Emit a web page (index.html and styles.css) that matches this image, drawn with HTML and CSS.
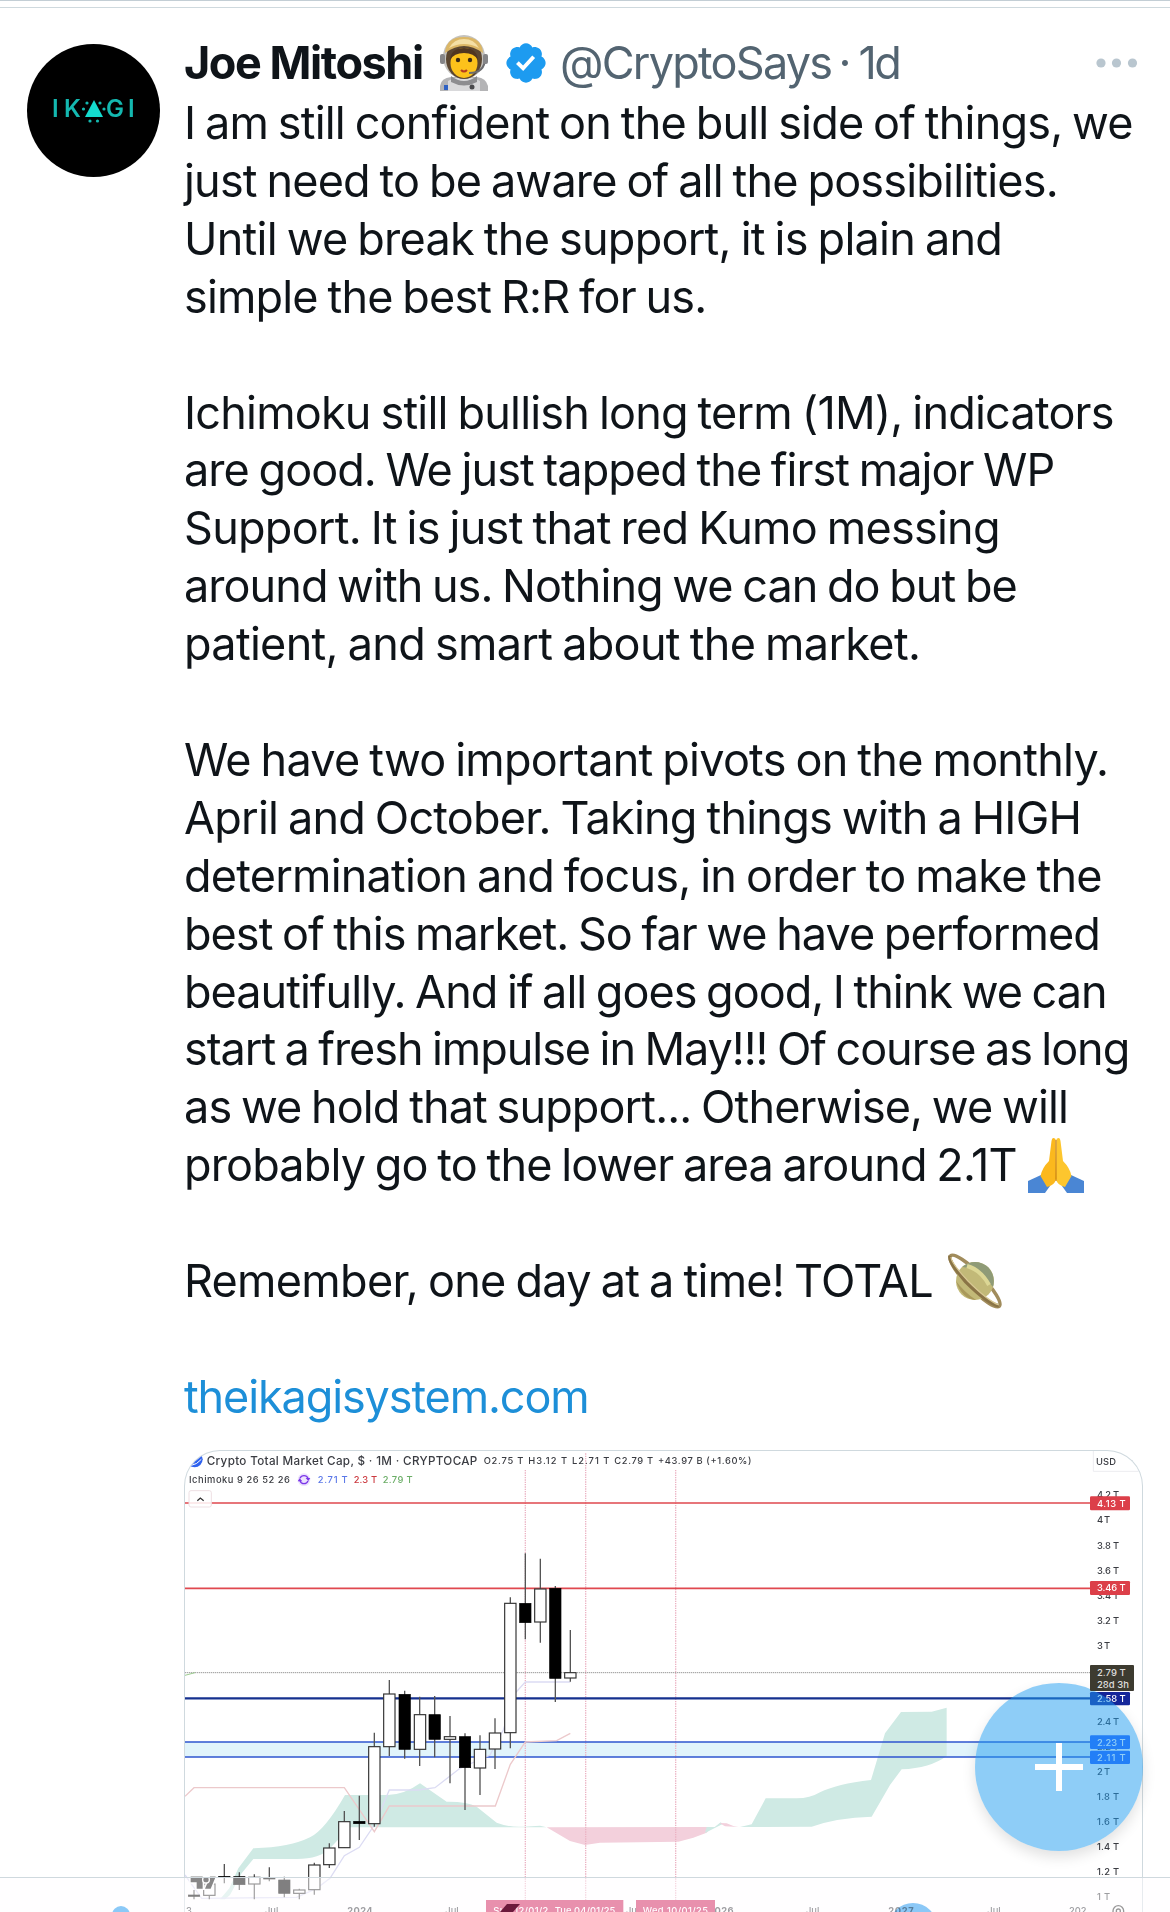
FILE: index.html
```
<!DOCTYPE html>
<html lang="en">
<head>
    <meta charset="UTF-8">
    <meta name="viewport" content="width=device-width, initial-scale=1.0">
    <title>Joe Mitoshi</title>
    <link rel="stylesheet" href="styles.css">
</head>
<body>
    <div class="top-line"></div>
    <article class="post">
        <div class="avatar">
            <svg viewBox="0 0 133 133">
                <g fill="#14b8b0">
                    <text class="avatar-text" x="25" y="73">I</text>
                    <text class="avatar-text" x="37" y="73">K</text>
                    <text class="avatar-text" x="79" y="73">G</text>
                    <text class="avatar-text" x="101" y="73">I</text>
                    <path d="M67 56 L76 73 H58 Z" fill="#14dccf"/>
                    <circle cx="60" cy="59" r="1.600"/><circle cx="73" cy="59" r="1.600"/>
                    <circle cx="56.500" cy="65" r="1.600"/><circle cx="77" cy="65" r="1.600"/>
                    <circle cx="63" cy="77" r="1.600"/><circle cx="70.500" cy="77" r="1.600"/>
                </g>
            </svg>
        </div>
        <div class="content">
            <header class="head">
                <span class="name">Joe Mitoshi</span>
                <svg class="astronaut" viewBox="0 0 50 56">
                    <path d="M1 56 V51 Q2 43 12 42 H38 Q47 43 49 51 V56 Z" fill="#b4b4b6"/>
                    <path d="M9 56 V46 L15 43 H35 L41 46 V56 Z" fill="#d9d9db"/>
                    <path d="M12 41 Q25 51 38 41 V47 Q25 54 12 47 Z" fill="#8d8d90"/>
                    <ellipse cx="25" cy="22" rx="21" ry="22" fill="#c4c2be"/>
                    <ellipse cx="25" cy="24" rx="18" ry="20" fill="#5b4630"/>
                    <path d="M6 18 Q7 2 25 2 Q43 2 44 18 Q34 11 25 11 Q16 11 6 18 Z" fill="#dcb766"/>
                    <path d="M10 13 Q15 4 25 4 Q35 4 40 13 Q25 5 10 13 Z" fill="#f4dfa5"/>
                    <ellipse cx="25" cy="28" rx="13.500" ry="15" fill="#fcc21b"/>
                    <path d="M11 25 Q12 13 25 13 Q38 13 39 25 Q35 18 25 18 Q15 18 11 25 Z" fill="#503620"/>
                    <circle cx="19" cy="25" r="2.200" fill="#3a2a18"/><circle cx="31" cy="25" r="2.200" fill="#3a2a18"/>
                    <path d="M22 35 Q25 38 28 35" fill="none" stroke="#b53c22" stroke-width="2"/>
                    <path d="M46 23 Q46 38 30 38" fill="none" stroke="#6c6c6f" stroke-width="2"/>
                    <rect x="1" y="19" width="5" height="10" rx="2" fill="#858588"/><rect x="44" y="19" width="5" height="10" rx="2" fill="#858588"/>
                    <rect x="5" y="50" width="4" height="5" fill="#2f62c4"/><circle cx="33" cy="52" r="2.500" fill="#4a4a4d"/>
                </svg>
                <svg class="badge" viewBox="0 0 22 22">
                    <path fill="#1d9bf0" d="M20.396 11c-.018-.646-.215-1.275-.57-1.816-.354-.54-.852-.972-1.438-1.246.223-.607.27-1.264.14-1.897-.131-.634-.437-1.218-.882-1.687-.47-.445-1.053-.75-1.687-.882-.633-.13-1.290-.083-1.897.14-.273-.587-.704-1.086-1.245-1.440S11.647 1.620 11 1.604c-.646.017-1.273.213-1.813.568s-.969.854-1.240 1.440c-.608-.223-1.267-.272-1.902-.14-.635.130-1.220.436-1.690.882-.445.470-.749 1.055-.878 1.688-.130.633-.080 1.290.144 1.896-.587.274-1.087.705-1.443 1.245-.356.540-.555 1.170-.574 1.817.020.647.218 1.276.574 1.817.356.540.856.972 1.443 1.245-.224.606-.274 1.263-.144 1.896.130.634.433 1.218.877 1.688.470.443 1.054.747 1.687.878.633.132 1.290.084 1.897-.136.274.586.705 1.084 1.246 1.439.540.354 1.170.551 1.816.569.647-.016 1.276-.213 1.817-.567s.972-.854 1.245-1.440c.604.239 1.266.296 1.903.164.636-.132 1.220-.447 1.680-.907.460-.460.776-1.044.908-1.681s.075-1.299-.165-1.903c.586-.274 1.084-.705 1.439-1.246.354-.540.551-1.170.569-1.816z"/>
                    <path fill="#fff" d="M9.660 14.850l-3.430-3.430 1.300-1.300 2.070 2.070 4.400-4.790 1.350 1.240z"/>
                </svg>
                <span class="handle">@CryptoSays</span>
                <span class="dot">·</span>
                <span class="time">1d</span>
                <svg class="more" viewBox="0 0 42 10">
                    <circle cx="5" cy="5" r="4.600"/><circle cx="20.500" cy="5" r="4.600"/><circle cx="36.500" cy="5" r="4.600"/>
                </svg>
            </header>
            <div class="text">
                <p>
                    <span class="line l1">I am still confident on the bull side of things, we</span>
                    <span class="line l2">just need to be aware of all the possibilities.</span>
                    <span class="line l3">Until we break the support, it is plain and</span>
                    <span class="line l4">simple the best R:R for us.</span>
                </p>
                <p>
                    <span class="line l5">Ichimoku still bullish long term (1M), indicators</span>
                    <span class="line l6">are good. We just tapped the first major WP</span>
                    <span class="line l7">Support. It is just that red Kumo messing</span>
                    <span class="line l8">around with us. Nothing we can do but be</span>
                    <span class="line l9">patient, and smart about the market.</span>
                </p>
                <p>
                    <span class="line l10">We have two important pivots on the monthly.</span>
                    <span class="line l11">April and October. Taking things with a HIGH</span>
                    <span class="line l12">determination and focus, in order to make the</span>
                    <span class="line l13">best of this market. So far we have performed</span>
                    <span class="line l14">beautifully. And if all goes good, I think we can</span>
                    <span class="line l15">start a fresh impulse in May!!! Of course as long</span>
                    <span class="line l16">as we hold that support... Otherwise, we will</span>
                    <span class="row"><span class="line l17">probably go to the lower area around 2.1T</span>
                        <svg class="emoji" viewBox="0 0 56 56">
                            <path d="M0 44 L13 38 L22 49 L17 56 H0 Z" fill="#4a86d4"/>
                            <path d="M56 44 L43 38 L34 49 L39 56 H56 Z" fill="#4a86d4"/>
                            <path d="M27.500 2 Q24 -1 23.500 4 L21 24 Q14 31 12.500 39 L19 50 Q27 48 28 42 Z" fill="#fbb81d"/>
                            <path d="M28.500 2 Q32 -1 32.500 4 L35 24 Q42 31 43.500 39 L37 50 Q29 48 28 42 Z" fill="#fdc62e"/>
                            <path d="M28 3 V44" stroke="#c9800f" stroke-width="1.200"/>
                        </svg>
                    </span>
                </p>
                <p>
                    <span class="row"><span class="line l18">Remember, one day at a time! TOTAL</span>
                        <svg class="emoji saturn" viewBox="0 0 56 56">
                            <ellipse cx="28" cy="28" rx="35" ry="8" transform="rotate(46 28 28)" fill="none" stroke="#a18c5c" stroke-width="3.500"/>
                            <circle cx="28" cy="28" r="19" fill="#c2b978"/>
                            <path d="M15 14 Q31 15 46 34 Q49 23 41 14 Q28 4 15 14 Z" fill="#8f9b77"/>
                            <path d="M20 13 Q34 17 42 32" fill="none" stroke="#dcd795" stroke-width="4"/>
                            <path d="M9 28 Q17 39 29 47 Q15 46 9 28 Z" fill="#a9995b"/>
                            <path d="M3 3 Q1 8 19 29 Q40 50 52 53" fill="none" stroke="#8a7446" stroke-width="3.500"/>
                            <path d="M4 4 Q4 10 21 28 Q41 48 52 52" fill="none" stroke="#d7c793" stroke-width="1.200"/>
                        </svg>
                    </span>
                </p>
                <p><a class="line link">theikagisystem.com</a></p>
            </div>
            <div class="card">
                <!-- chart canvas is drawn at 3x -->
                <svg class="chart" viewBox="45 -627 2871 1383">
                    <!-- kumo -->
                    <path class="kumo-up" d="M150 718 L178 685 L205 625 L250 565 Q360 562 420 532 Q465 510 525 405 H650 Q700 406 750 370 L830 425 Q890 424 920 440 L980 488 Q1020 503 1060 500 L1110 497 L1130 502 H540 L480 565 Q450 597 380 597 H250 L215 640 L180 705 L165 718 Z"/>
                    <path class="kumo-down" d="M1130 502 L1200 543 L1245 555 L1290 548 L1525 545 L1570 533 L1610 518 L1625 501 Z"/>
                    <path class="kumo-up" d="M1605 519 L1610 501 H1634 L1652 487 L1658 492 Z"/>
                    <path class="kumo-down" d="M1648 489 L1670 490 L1690 498 L1705 501 L1665 499 Z"/>
                    <!-- support zone -->
                    <rect x="45" y="246" width="2715" height="45" fill="#c9ebf7" fill-opacity=".55"/>
                    <path class="kumo-up" d="M1710 501 L1745 493 L1787 415 L1880 415 Q1920 415 1950 397 Q2000 372 2103 360 L2145 220 L2193 156 L2285 155 L2330 143 V288 Q2280 325 2195 328 L2160 375 L2105 470 Q2000 473 1925 500 Z"/>
                    <!-- event lines -->
                    <path class="event" d="M1066 -570 V756 M1247 -620 V756 M1517 -570 V756"/>
                    <!-- levels -->
                    <path d="M45 -471 H2760 M45 -215 H2760" stroke="#e0484f" stroke-width="5"/>
                    <path d="M45 38 H2760" stroke="#9a9a9a" stroke-width="3" stroke-dasharray="4 2"/>
                    <path d="M45 115 H2760" stroke="#15308f" stroke-width="7"/>
                    <path d="M45 246 H2760 M45 291 H2760" stroke="#2f56cf" stroke-width="5"/>
                    <!-- tenkan and kijun -->
                    <path class="tenkan" d="M45 645 L95 715 L380 712 L440 685 L480 655 L523 587 L568 562 L613 495 L658 390 H745 L795 383 L870 325 L960 285 L1000 210 L1035 100 L1066 66 H1201"/>
                    <path class="kijun" d="M45 409 L72 383 H523 L613 515 L658 438 H976 L1021 313 L1066 246 L1160 242 L1201 220"/>
                    <path d="M45 46 L75 38" stroke="#9bcb8f" stroke-width="3"/>
                    <!-- candles -->
                    <path class="wick" d="M72 690 V718 M118 706 V718 M163 612 V670 M208 637 V690 M253 643 V718 M298 622 V664 M343 650 V712 M388 686 V718 M433 608 V704 M478 550 V624 M523 453 V564 M568 407 V540 M613 218 V500 M658 60 V288 M704 92 V296 M749 110 V318 M794 108 V292 M840 168 V370 M885 220 V450 M930 226 V405 M975 175 V327 M1021 -188 V265 M1066 -320 V-62 M1111 -304 V-52 M1156 -222 V126 M1201 -90 V65"/>
                    <g class="up">
                        <rect x="101" y="672" width="34" height="34"/>
                        <rect x="236" y="652" width="34" height="20"/>
                        <rect x="371" y="690" width="34" height="10"/>
                        <rect x="416" y="615" width="34" height="74"/>
                        <rect x="461" y="564" width="34" height="50"/>
                        <rect x="506" y="485" width="34" height="78"/>
                        <rect x="596" y="260" width="34" height="231"/>
                        <rect x="641" y="102" width="34" height="158"/>
                        <rect x="733" y="164" width="34" height="104"/>
                        <rect x="823" y="230" width="34" height="8"/>
                        <rect x="913" y="268" width="34" height="56"/>
                        <rect x="958" y="219" width="34" height="48"/>
                        <rect x="1004" y="-170" width="34" height="388"/>
                        <rect x="1094" y="-213" width="34" height="99"/>
                        <rect x="1184" y="38" width="34" height="16"/>
                    </g>
                    <g class="down">
                        <rect x="55" y="705" width="34" height="4"/>
                        <rect x="146" y="649" width="34" height="4"/>
                        <rect x="191" y="650" width="34" height="24"/>
                        <rect x="281" y="653" width="34" height="4"/>
                        <rect x="326" y="660" width="34" height="40"/>
                        <rect x="551" y="484" width="34" height="7"/>
                        <rect x="687" y="103" width="34" height="165"/>
                        <rect x="777" y="164" width="34" height="74"/>
                        <rect x="868" y="230" width="34" height="93"/>
                        <rect x="1049" y="-170" width="34" height="58"/>
                        <rect x="1139" y="-215" width="34" height="270"/>
                    </g>
                    <!-- legend -->
                    <circle cx="74" cy="-602" r="24" fill="#2f62ee"/>
                    <path d="M58 -592 Q76 -592 88 -612 M64 -584 Q80 -586 94 -602" fill="none" stroke="#fff" stroke-width="3"/>
                    <text class="title" x="110" y="-585" textLength="812">Crypto Total Market Cap, $ · 1M · CRYPTOCAP</text>
                    <text x="941" y="-588" textLength="119">O2.75 T</text>
                    <text x="1075" y="-588" textLength="116">H3.12 T</text>
                    <text x="1206" y="-588" textLength="112">L2.71 T</text>
                    <text x="1333" y="-588" textLength="116">C2.79 T</text>
                    <text x="1464" y="-588" textLength="280">+43.97 B (+1.60%)</text>
                    <text x="57" y="-530" textLength="303">Ichimoku 9 26 52 26</text>
                    <circle cx="402" cy="-541" r="19" fill="#ece2fd"/>
                    <path d="M390 -545 A13 13 0 0 1 414 -545 M414 -537 A13 13 0 0 1 390 -537" fill="none" stroke="#7a35e8" stroke-width="4"/>
                    <path d="M407 -546 H421 L415 -537 Z M397 -536 H383 L389 -545 Z" fill="#7a35e8"/>
                    <text x="443" y="-530" textLength="90" style="fill:#5b78e8">2.71 T</text>
                    <text x="551" y="-530" textLength="70" style="fill:#cc3a40">2.3 T</text>
                    <text x="638" y="-530" textLength="90" style="fill:#6cae68">2.79 T</text>
                    <rect x="57" y="-508" width="67" height="49" rx="6" fill="#fff" fill-opacity=".85" stroke="#eedfe3" stroke-width="3"/>
                    <path d="M82 -478 L91 -486 L101 -478" fill="none" stroke="#333" stroke-width="4"/>
                    <!-- price axis -->
                    <path d="M2770 -627 V-566 H2916" fill="none" stroke="#ececf0" stroke-width="3"/>
                    <text x="2778" y="-586" textLength="60">USD</text>
                    <text x="2781" y="-485" textLength="66">4.2 T</text>
                    <text x="2781" y="-410" textLength="39">4 T</text>
                    <text x="2781" y="-334" textLength="66">3.8 T</text>
                    <text x="2781" y="-258" textLength="66">3.6 T</text>
                    <text x="2781" y="-183" textLength="66">3.4 T</text>
                    <text x="2781" y="-108" textLength="66">3.2 T</text>
                    <text x="2781" y="-33" textLength="39">3 T</text>
                    <text x="2781" y="194" textLength="66">2.4 T</text>
                    <text x="2781" y="269" textLength="66">2.2 T</text>
                    <text x="2781" y="345" textLength="39">2 T</text>
                    <text x="2781" y="420" textLength="66">1.8 T</text>
                    <text x="2781" y="495" textLength="66">1.6 T</text>
                    <text x="2781" y="571" textLength="66">1.4 T</text>
                    <text x="2781" y="646" textLength="66">1.2 T</text>
                    <text x="2781" y="721" textLength="39">1 T</text>
                    <rect x="2760" y="-491" width="120" height="42" rx="4" fill="#dc3f49"/>
                    <rect x="2760" y="-237" width="120" height="42" rx="4" fill="#dc3f49"/>
                    <rect x="2760" y="96" width="120" height="40" rx="4" fill="#15269a"/>
                    <rect x="2760" y="226" width="120" height="41" rx="4" fill="#2962ff"/>
                    <rect x="2760" y="272" width="120" height="40" rx="4" fill="#2962ff"/>
                    <g class="tag">
                        <text x="2781" y="-460" textLength="86">4.13 T</text>
                        <text x="2781" y="-206" textLength="86">3.46 T</text>
                        <text x="2781" y="126" textLength="86">2.58 T</text>
                        <text x="2781" y="257" textLength="86">2.23 T</text>
                        <text x="2781" y="302" textLength="86">2.11 T</text>
                    </g>
                    <!-- tradingview mark -->
                    <g fill="#111" stroke="#fff" stroke-width="8" paint-order="stroke">
                        <path d="M62 650 H98 V686 H80 V667 H62 Z M120 650 H137 L122 686 H105 Z"/>
                        <circle cx="108" cy="659" r="8"/>
                    </g>
                    <!-- date axis -->
                    <text x="48" y="763">3</text>
                    <text x="285" y="763">Jul</text>
                    <text class="year" x="532" y="763" textLength="76">2024</text>
                    <text x="826" y="763">Jul</text>
                    <text x="1368" y="763">Jul</text>
                    <text class="year" x="1615" y="763" textLength="76">2026</text>
                    <text x="1908" y="763">Jul</text>
                    <text class="year" x="2155" y="763" textLength="76">2027</text>
                    <text x="2452" y="763">Jul</text>
                    <text x="2697" y="763">202</text>
                    <rect x="948" y="720" width="412" height="50" fill="#d1235a"/>
                    <rect x="1398" y="720" width="237" height="50" fill="#d1235a"/>
                    <g class="tag">
                        <text x="970" y="763" textLength="165">Sun 12/01/2</text>
                        <text x="1154" y="763" textLength="182">Tue 04/01/25</text>
                        <text x="1418" y="763" textLength="196">Wed 10/01/25</text>
                    </g>
                    <circle cx="2845" cy="753" r="16" fill="none" stroke="#333" stroke-width="4"/>
                    <circle cx="2845" cy="753" r="6" fill="none" stroke="#333" stroke-width="4"/>
                </svg>
            </div>
        </div>
    </article>
    <nav class="tabbar">
        <svg viewBox="0 0 1170 34">
            <circle cx="121" cy="37" r="9" fill="#8bc9f7"/>
            <circle class="alert" cx="913" cy="49" r="24" fill="#8bc9f7"/>
            <path d="M507 26 H520 L513 34 H500 Z" fill="#6b1a3c"/>
        </svg>
    </nav>
    <button class="fab" aria-label="Post">
        <svg viewBox="0 0 48 48"><path d="M24 0 V48 M0 24 H48" stroke="#fff" stroke-width="6"/></svg>
    </button>
    <div class="price-now"><span>2.79 T</span><span>28d 3h</span></div>
</body>
</html>
```
FILE: styles.css
```
* {
    box-sizing: border-box;
}
html {
    overflow: hidden;
}
body {
    font-family: Inter, 'Liberation Sans', sans-serif;
    margin: 0;
    height: 1912px;
    overflow: hidden;
    position: relative;
    background: #fff;
    color: #0f1419;
}
svg {
    display: block;
}
p {
    margin: 0;
}
.top-line {
    height: 8px;
    border-top: 1px solid #c3ced5;
    border-bottom: 1px solid #cfd9de;
}
.post {
    display: flex;
    gap: 24px;
    padding: 27px 27px 0;
}
.avatar {
    width: 133px;
    height: 133px;
    margin-top: 9px;
    flex-shrink: 0;
    border-radius: 50%;
    background: #000;
    overflow: hidden;
}
.avatar-text {
    font-size: 24px;
    font-weight: 600;
}
.content {
    width: 959px;
}
.head {
    display: flex;
    align-items: center;
    height: 56px;
    font-size: 45px;
    line-height: 56px;
    white-space: nowrap;
}
.name {
    font-weight: 700;
    width: 255px;
    letter-spacing: -1.44px;
}
.astronaut {
    width: 50px;
    height: 56px;
}
.badge {
    width: 46px;
    height: 46px;
    margin-left: 14px;
}
.handle, .dot, .time {
    color: #536471;
}
.handle {
    margin-left: 11px;
    letter-spacing: -1.75px;
}
.dot {
    width: 27px;
    text-align: center;
}
.time {
    letter-spacing: -2.4px;
}
.more {
    width: 42px;
    height: 10px;
    margin-left: auto;
    margin-right: 5px;
    fill: #b9c6cf;
}
.text {
    display: flex;
    flex-direction: column;
    gap: 57.9px;
    margin-top: 3px;
    font-size: 45px;
    line-height: 57.9px;
    word-spacing: -2.1px;
}
.text p {
    display: flex;
    flex-direction: column;
    align-items: flex-start;
}
.line {
    white-space: nowrap;
}
.l1 { letter-spacing: -0.81px; }
.l2 { letter-spacing: -0.81px; }
.l3 { letter-spacing: -0.74px; }
.l4 { letter-spacing: -0.83px; }
.l5 { letter-spacing: -0.79px; }
.l6 { letter-spacing: -0.94px; }
.l7 { letter-spacing: -0.74px; }
.l8 { letter-spacing: -0.95px; }
.l9 { letter-spacing: -0.69px; }
.l10 { letter-spacing: -0.75px; }
.l11 { letter-spacing: -0.78px; }
.l12 { letter-spacing: -0.78px; }
.l13 { letter-spacing: -0.96px; }
.l14 { letter-spacing: -0.98px; }
.l15 { letter-spacing: -1.05px; }
.l16 { letter-spacing: -0.89px; }
.l17 { letter-spacing: -0.86px; }
.l18 { letter-spacing: -0.71px; }
.row {
    display: flex;
    align-items: center;
}
.emoji {
    width: 56px;
    height: 56px;
    margin-left: 11px;
}
.saturn {
    margin-left: 14px;
}
.link {
    color: #1d8fd8;
    letter-spacing: -1.12px;
}
.card {
    width: 959px;
    height: 462px;
    margin-top: 24.3px;
    border: 1px solid #cfd9de;
    border-bottom: none;
    border-radius: 36px 36px 0 0;
    overflow: hidden;
}
.chart {
    width: 957px;
    height: 461px;
}
.chart text {
    font-size: 28px;
    font-weight: 500;
    fill: #3a3c42;
}
.chart .title {
    font-size: 35px;
}
.chart .year {
    font-weight: 700;
}
.chart .tag text {
    fill: #fff;
}
.kumo-up {
    fill: #cfeae4;
}
.kumo-down {
    fill: #f3d0dc;
}
.event {
    stroke: #ebb3c3;
    stroke-width: 4;
    stroke-dasharray: 4 3;
}
.tenkan, .kijun {
    fill: none;
    stroke: #dcdcf3;
    stroke-width: 4;
}
.kijun {
    stroke: #ecc9cb;
}
.wick {
    stroke: #555;
    stroke-width: 4;
}
.up rect {
    fill: #fff;
    stroke: #333;
    stroke-width: 3.5;
}
.down rect {
    fill: #000;
    stroke: #000;
    stroke-width: 2;
}
.tabbar {
    position: absolute;
    left: 0;
    right: 0;
    top: 1877px;
    height: 35px;
    border-top: 1px solid #cfd9de;
    background: rgba(255, 253, 255, 0.5);
    overflow: hidden;
}
.alert {
    mix-blend-mode: multiply;
}
.fab {
    position: absolute;
    left: 975px;
    top: 1683px;
    width: 168px;
    height: 168px;
    padding: 60px;
    border: none;
    border-radius: 50%;
    background: rgba(29, 155, 240, 0.5);
    box-shadow: 0 6px 14px rgba(0, 0, 0, 0.12);
}
.price-now {
    position: absolute;
    left: 1090px;
    top: 1665px;
    width: 44px;
    height: 26px;
    padding: 2px 0 0 7px;
    display: flex;
    flex-direction: column;
    border-radius: 1px;
    background: #3d3b30;
    color: #ddd;
    font-size: 9.5px;
    font-weight: 500;
    line-height: 11.5px;
    white-space: nowrap;
}
```
